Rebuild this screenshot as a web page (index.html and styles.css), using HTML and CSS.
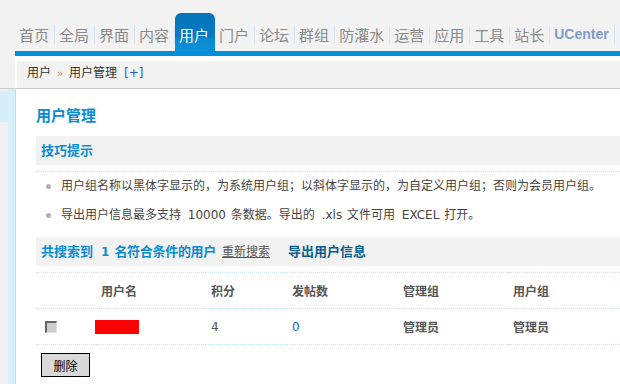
FILE: index.html
```html
<!DOCTYPE html>
<html>
<head>
    <title>用户管理</title>
    <meta charset="utf-8">
    <link rel="stylesheet" href="styles.css">
</head>
<body>

<div class="header">
    <ul class="nav">
        <li><a href="#">首页</a></li>
        <li><a href="#">全局</a></li>
        <li><a href="#">界面</a></li>
        <li><a href="#">内容</a></li>
        <li class="active"><a href="#">用户</a></li>
        <li><a href="#">门户</a></li>
        <li><a href="#">论坛</a></li>
        <li><a href="#">群组</a></li>
        <li><a href="#">防灌水</a></li>
        <li><a href="#">运营</a></li>
        <li><a href="#">应用</a></li>
        <li><a href="#">工具</a></li>
        <li><a href="#">站长</a></li>
        <li class="uc"><a href="#">UCenter</a></li>
    </ul>
    <div class="navbar"></div>
    <div class="crumb-wrap">
        <div class="crumb">
            用户<span class="sep">»</span>用户管理<a class="add" href="#">[+]</a>
        </div>
    </div>
</div>

<div class="main">
    <div class="side">
        <div class="side-menu"><div class="side-current"></div></div>
        <div class="side-scroll"></div>
    </div>

    <div class="content">
        <h3 class="title">用户管理</h3>

        <div class="partition">技巧提示</div>
        <ul class="tips">
            <li>用户组名称以黑体字显示的，为系统用户组；以斜体字显示的，为自定义用户组；否则为会员用户组。</li>
            <li>导出用户信息最多支持 <span class="em">10000</span> 条数据。导出的 <span class="em">.xls</span> 文件可用 <span class="em">EXCEL</span> 打开。</li>
        </ul>

        <div class="partition">
            共搜索到<span class="num">1</span><span class="cnt">名符合条件的用户</span><a class="research" href="#">重新搜索</a><a class="export" href="#">导出用户信息</a>
        </div>

        <table class="list">
            <colgroup>
                <col style="width:60px">
                <col style="width:110px">
                <col style="width:81px">
                <col style="width:111px">
                <col style="width:110px">
                <col>
            </colgroup>
            <tr class="head">
                <td></td>
                <td>用户名</td>
                <td>积分</td>
                <td>发帖数</td>
                <td>管理组</td>
                <td>用户组</td>
            </tr>
            <tr>
                <td class="chk"><span class="checkbox"></span></td>
                <td><span class="hidden-name"></span></td>
                <td>4</td>
                <td><a href="#">0</a></td>
                <td class="bold">管理员</td>
                <td class="bold">管理员</td>
            </tr>
        </table>

        <button class="btn">删除</button>
    </div>
</div>

</body>
</html>
```

FILE: styles.css
```css
body {
    margin: 0;
    padding: 0;
    background: #f2f2f2;
    font-family: "DejaVu Sans", "Noto Sans CJK SC", sans-serif;
    font-size: 12px;
    color: #444;
    overflow: hidden;
}
a {
    text-decoration: none;
}

/* top navigation */
.nav {
    display: flex;
    align-items: flex-end;
    list-style: none;
    margin: 0;
    padding: 0 0 0 15px;
    height: 51px;
}
.nav li {
    border-right: 1px solid #d6e6f4;
    margin-bottom: 7px;
}
.nav li a {
    display: block;
    padding: 0 5px 0 4px;
    height: 19px;
    line-height: 19px;
    font-family: "Noto Sans CJK SC", sans-serif;
    font-size: 15px;
    color: #8a8a8a;
}
.nav li.active {
    margin-bottom: 0;
    border-right-color: transparent;
    border-radius: 6px 6px 0 0;
    background: linear-gradient(to bottom, #0673b9 0, #0879c0 60%, #0a8bd2 70%, #0b91d9 100%);
}
.nav li.active a {
    height: 19px;
    padding-top: 12px;
    padding-bottom: 7px;
    color: #fff;
}
.nav li.uc a {
    font-family: "Liberation Sans", sans-serif;
    font-size: 14px;
    font-weight: bold;
    color: #809dc6;
}
.navbar {
    margin-left: 15px;
    height: 5px;
    background: #0090da;
}
.crumb-wrap {
    margin-left: 15px;
    padding: 5px 0 0 2px;
    background: #fff;
}
.crumb {
    height: 26px;
    line-height: 25px;
    padding-left: 10px;
    background: #f2f2f2;
    color: #333;
    border-bottom: 1px solid #f2f2f2;
}
.crumb .sep {
    display: inline-block;
    width: 18px;
    text-align: center;
    font-size: 10px;
    color: #d08a6a;
}
.crumb .add {
    margin-left: 7px;
    font-size: 12px;
    color: #2366c8;
}
.header {
    border-bottom: 1px solid #cccccc;
}

/* left frame + content */
.main {
    display: flex;
    height: 300px;
}
.side {
    display: flex;
    width: 15px;
    border-right: 1px solid #c4dbe8;
}
.side-menu {
    width: 8px;
    background: #f0f0f0;
}
.side-current {
    margin-top: 2px;
    height: 31px;
    background: #d5eefa;
}
.side-scroll {
    width: 7px;
    background: #d5eefa;
}
.content {
    flex: 1;
    background: #fff;
    padding: 17px 0 0 20px;
}
.title {
    margin: 0 0 10px;
    line-height: 20px;
    font-size: 15px;
    font-weight: bold;
    color: #0a8cd2;
}
.partition {
    height: 29px;
    line-height: 29px;
    padding-left: 5px;
    margin-bottom: 6px;
    background: #f2f2f2;
    font-size: 13px;
    font-weight: bold;
    color: #0a8cd2;
    white-space: nowrap;
}
.partition .num {
    margin: 0 5px 0 8px;
    font-size: 12px;
}
.partition .cnt {
    letter-spacing: -0.3px;
}
.partition .research {
    margin-left: 6px;
    font-size: 12px;
    font-weight: normal;
    color: #555;
    text-decoration: underline;
}
.partition .export {
    margin-left: 18px;
    color: #0a5d91;
}
.tips {
    list-style: none;
    margin: 0 0 7px;
    padding: 0;
    border-top: 1px dotted #c5e2f0;
}
.tips li {
    position: relative;
    line-height: 29px;
    padding-left: 25px;
    color: #444;
}
.tips li .em {
    margin: 0 1px 0 3px;
}
.tips li::before {
    content: "";
    position: absolute;
    left: 10px;
    top: 12px;
    width: 5px;
    height: 5px;
    border-radius: 50%;
    background: #b0b0b0;
}

/* member list */
.list {
    width: 100%;
    border-collapse: collapse;
    table-layout: fixed;
}
.list td {
    height: 35px;
    padding: 0 0 0 5px;
    border-top: 1px dotted #c5e2f0;
    border-bottom: 1px dotted #c5e2f0;
    color: #555;
}
.list .head td,
.list td.bold {
    font-weight: bold;
}
.list a {
    color: #2366c8;
}
.list td.chk {
    padding-left: 9px;
}
.checkbox {
    display: inline-block;
    vertical-align: middle;
    width: 9px;
    height: 9px;
    background: #cccccc;
    border-top: 2px solid #666;
    border-left: 2px solid #666;
    border-right: 1px solid #e0e0e0;
    border-bottom: 1px solid #e0e0e0;
}
.hidden-name {
    display: inline-block;
    vertical-align: middle;
    margin-left: -6px;
    width: 44px;
    height: 14px;
    background: #ff0000;
}
.btn {
    margin: 8px 0 0 5px;
    width: 49px;
    height: 24px;
    padding: 0;
    border: 1px solid #000;
    background: #d9d9d9;
    font-family: "Noto Sans CJK SC", sans-serif;
    font-size: 12px;
    color: #000;
}
```
